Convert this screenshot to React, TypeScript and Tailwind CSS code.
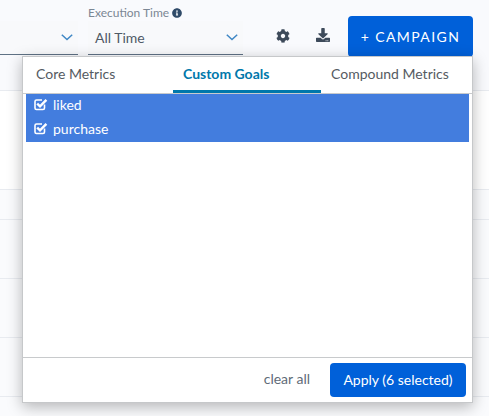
import { FaCog, FaDownload, FaInfoCircle } from "react-icons/fa";

function Chevron() {
  return (
    <svg width="12" height="7" viewBox="0 0 12 7" fill="none" className="text-[#3f87c5]">
      <path d="M.8.8L6 5.6L11.2.8" stroke="currentColor" strokeWidth="1.5" />
    </svg>
  );
}

function Check() {
  return (
    <svg width="14" height="13" viewBox="0 0 14 13" fill="none" className="shrink-0">
      <path d="M10.5 6.5V10a1.5 1.5 0 0 1-1.5 1.5H2.5A1.5 1.5 0 0 1 1 10V3.5A1.5 1.5 0 0 1 2.5 2H8" stroke="white" strokeWidth="1.6" />
      <path d="M3.2 5.6L6 8.3L12.4 1.8" stroke="white" strokeWidth="2.4" />
    </svg>
  );
}

function Select({ width, label, value }: { width: string; label?: boolean; value?: string }) {
  return (
    <div className={`flex flex-col ${width}`}>
      <div className="flex h-[21px] items-end gap-[3px] pb-[1px] text-[12px] leading-[15px] text-[#7b8794]">
        {label && (
          <>
            <span>Execution Time</span>
            <FaInfoCircle className="mb-[2px] h-[10px] w-[10px] text-[#2f4a68]" />
          </>
        )}
      </div>
      <div className="flex h-[34px] items-center justify-between border-b border-[#5f7285] bg-[#f8f9fb] pb-[1px] pl-[7px] pr-[5px]">
        <span className="text-[14px] text-[#4f5a66]">{value}</span>
        <Chevron />
      </div>
    </div>
  );
}

const rows = ["h-[99px]", "h-[30px]", "h-[59px]", "h-[59px]", "h-[59px]", "h-[20px]"];

export default function App() {
  return (
    <div className="relative h-[416px] w-[489px] overflow-hidden bg-[#f9fafd] font-['Lato','Liberation_Sans',sans-serif]">
      <div className="flex h-[90px] items-start gap-[10px] pr-[16px]">
        <Select width="w-[78px]" />
        <Select width="w-[155px]" label value="All Time" />
        <div className="ml-auto flex items-start">
          <button className="mr-[26px] mt-[29px] text-[#3d4a5a]">
            <FaCog className="h-[14px] w-[14px]" />
          </button>
          <button className="mr-[18px] mt-[28px] text-[#3d4a5a]">
            <FaDownload className="h-[14px] w-[14px]" />
          </button>
          <button className="mt-[16px] flex h-[41px] w-[125px] items-center justify-center rounded-[4px] bg-[#0060d9] text-[14px] tracking-[1.4px] text-white">
            + CAMPAIGN
          </button>
        </div>
      </div>
      <div className="flex flex-col border-t border-[#e8ebf0]">
        {rows.map((h, i) => (
          <div key={i} className={`${h} border-b border-[#e8ebf0] ${i === 0 ? "bg-white" : "bg-[#fafbfd]"}`} />
        ))}
      </div>

      <div className="absolute left-[22px] top-[56px] flex h-[347px] w-[451px] flex-col border border-[#c6c8ca] bg-white shadow-[0_4px_14px_rgba(0,0,0,0.28)]">
        <div className="flex h-[37px] shrink-0 border-b border-[#c8cacc] text-[14px] text-[#555b62]">
          <div className="flex w-[150px] items-center pb-[3px] pl-[13px]">Core Metrics</div>
          <div className="flex w-[148px] items-center border-b-[3px] border-[#0078ab] pl-[10px] font-bold text-[#0078ab]">
            Custom Goals
          </div>
          <div className="flex flex-1 items-center pb-[3px] pl-[10px]">Compound Metrics</div>
        </div>
        <div className="flex-1 px-[3px]">
          <div className="bg-[#437dde] text-[14px] text-white">
            {["liked", "purchase"].map((t) => (
              <div key={t} className="flex h-[24px] items-center gap-[5px] pb-[3px] pl-[8px]">
                <Check />
                <span>{t}</span>
              </div>
            ))}
          </div>
        </div>
        <div className="flex h-[45px] shrink-0 items-start justify-end gap-[20px] border-t border-[#c8cacc] pr-[6px] pt-[5px]">
          <span className="mt-[7px] text-[14px] leading-[17px] text-[#5f6b78]">clear all</span>
          <button className="h-[34px] w-[136px] rounded-[4px] bg-[#0060d9] pb-[2px] text-[14px] text-white">
            Apply (6 selected)
          </button>
        </div>
      </div>
    </div>
  );
}
